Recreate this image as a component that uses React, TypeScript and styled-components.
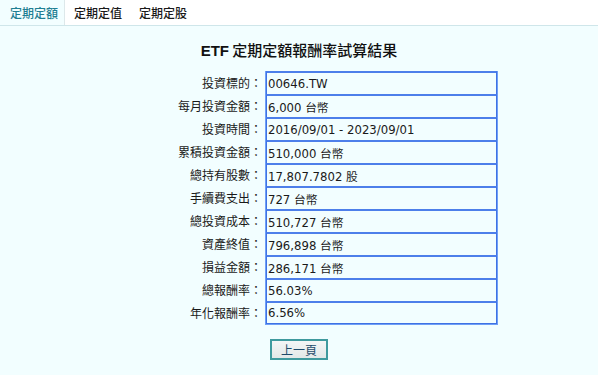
import React, { FC } from "react";
import styled, { createGlobalStyle } from "styled-components";

const GlobalStyle = createGlobalStyle`
  html, body {
    margin: 0;
    padding: 0;
    background: #f2feff;
  }
  body {
    font-family: "DejaVu Sans", "Noto Sans CJK TC", sans-serif;
    color: #1a1a1a;
  }
`;

const Page = styled.div`
  width: 598px;
  height: 375px;
  background: #f2feff;
  overflow: hidden;
`;

const TabBar = styled.div`
  display: flex;
  height: 26px;
  background: #ffffff;
  border-bottom: 1px solid #cfe6ea;
  box-sizing: border-box;
`;

const Tab = styled.div<{ $active?: boolean }>`
  display: flex;
  align-items: center;
  height: 100%;
  padding: ${(p) => (p.$active ? "0 6px 0 10px" : "0 8px 0 9px")};
  font-family: "Noto Sans CJK TC", sans-serif;
  font-size: 12px;
  font-weight: 500;
  color: ${(p) => (p.$active ? "#1f7f93" : "#1a1a1a")};
  background: ${(p) => (p.$active ? "#f2feff" : "transparent")};
  border-right: ${(p) => (p.$active ? "1px solid #dde8ea" : "none")};
`;

const Title = styled.h1`
  margin: 14px 0 0;
  text-align: center;
  font-family: "Noto Sans CJK TC", sans-serif;
  font-size: 15px;
  font-weight: 500;
  line-height: 20px;
  color: #111;
  b {
    font-family: "Liberation Sans", sans-serif;
    font-weight: 700;
  }
`;

const Form = styled.div`
  display: grid;
  grid-template-columns: 265px 233px;
  margin-top: 10px;
`;

const Labels = styled.div`
  grid-column: 1;
  display: flex;
  flex-direction: column;
`;

const Label = styled.div`
  display: flex;
  align-items: center;
  justify-content: flex-end;
  height: 23px;
  padding-right: 3px;
  font-family: "Noto Sans CJK TC", sans-serif;
  font-size: 12px;
  color: #1a1a1a;
  white-space: nowrap;
`;

const Values = styled.div`
  grid-column: 2;
  display: flex;
  flex-direction: column;
  border: 1px solid #6f9ff6;
  border-top: none;
`;

const Value = styled.div`
  display: flex;
  align-items: center;
  height: 23px;
  box-sizing: border-box;
  padding-left: 1px;
  border: 1px solid #3f72e4;
  border-top: 2px solid #4d7fea;
  border-bottom: none;
  font-size: 11.7px;
  color: #1a1a1a;
  white-space: nowrap;
  &:last-child {
    border-bottom: 1px solid #3f72e4;
  }
`;

const Footer = styled.div`
  display: flex;
  justify-content: center;
  margin-top: 14px;
`;

const BackButton = styled.button`
  width: 58px;
  height: 21px;
  box-sizing: border-box;
  padding: 0;
  border: 2px solid #3f9a9e;
  background: linear-gradient(#f4f6f6, #e2e8e8);
  font-family: "Noto Sans CJK TC", sans-serif;
  font-size: 12px;
  color: #1d4a6a;
  cursor: pointer;
`;

interface IRow {
  label: string;
  value: string;
}

const rows: IRow[] = [
  { label: "投資標的：", value: "00646.TW" },
  { label: "每月投資金額：", value: "6,000 台幣" },
  { label: "投資時間：", value: "2016/09/01 - 2023/09/01" },
  { label: "累積投資金額：", value: "510,000 台幣" },
  { label: "總持有股數：", value: "17,807.7802 股" },
  { label: "手續費支出：", value: "727 台幣" },
  { label: "總投資成本：", value: "510,727 台幣" },
  { label: "資產終值：", value: "796,898 台幣" },
  { label: "損益金額：", value: "286,171 台幣" },
  { label: "總報酬率：", value: "56.03%" },
  { label: "年化報酬率：", value: "6.56%" },
];

const App: FC = () => {
  return (
    <>
      <GlobalStyle />
      <Page>
        <TabBar>
          <Tab $active>定期定額</Tab>
          <Tab>定期定值</Tab>
          <Tab>定期定股</Tab>
        </TabBar>
        <Title>
          <b>ETF</b> 定期定額報酬率試算結果
        </Title>
        <Form>
          <Labels>
            {rows.map((r) => (
              <Label key={r.label}>{r.label}</Label>
            ))}
          </Labels>
          <Values>
            {rows.map((r) => (
              <Value key={r.label}>{r.value}</Value>
            ))}
          </Values>
        </Form>
        <Footer>
          <BackButton>上一頁</BackButton>
        </Footer>
      </Page>
    </>
  );
};

export default App;
